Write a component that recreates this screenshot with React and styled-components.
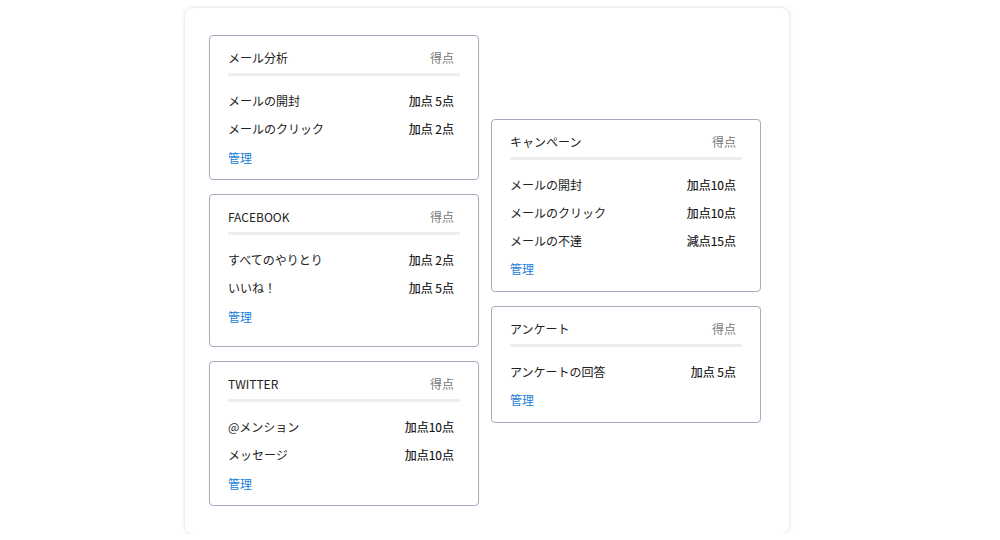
import React from "react";
import styled, { createGlobalStyle } from "styled-components";

const Global = createGlobalStyle`
  html, body { margin: 0; padding: 0; background: #ffffff; }
  body { font-family: "Noto Sans CJK JP", "Noto Sans", sans-serif; color: #222; }
`;

const Page = styled.div`
  padding: 8px 0 0 185px;
`;

const Panel = styled.div`
  width: 604px;
  box-sizing: border-box;
  padding: 27px 29px 28px 24px;
  background: #fff;
  border-radius: 8px;
  box-shadow: 0 0 3px 1px rgba(225, 215, 225, 0.7);
  display: grid;
  grid-template-columns: 270px 270px;
  column-gap: 12px;
  align-items: center;
`;

const Column = styled.div`
  display: flex;
  flex-direction: column;
  gap: 14px;
`;

const Card = styled.div`
  box-sizing: border-box;
  border: 1px solid #a9a9bf;
  border-radius: 4px;
  padding: 13px 18px ${(p) => (p.$extra ? 16 : 8)}px;
  background: #fff;
`;

const Header = styled.div`
  display: flex;
  justify-content: space-between;
  align-items: center;
  padding-right: 6px;
  font-size: 12px;
  line-height: 18px;
`;

const Score = styled.span`
  color: #777;
`;

const Divider = styled.div`
  height: 3px;
  background: #eeedf1;
  margin: 6px 0 11px;
`;

const Row = styled.div`
  display: flex;
  justify-content: space-between;
  align-items: center;
  padding-right: 6px;
  height: 28px;
  font-size: 12px;
  line-height: 18px;
`;

const Value = styled.span`
  color: #111;
  -webkit-text-stroke: 0.15px #111;
`;

const Link = styled.a`
  display: flex;
  align-items: center;
  height: 28px;
  font-size: 12px;
  color: #1a80d8;
  text-decoration: none;
  cursor: pointer;
`;

const cards = {
  left: [
    { title: "メール分析", rows: [["メールの開封", "加点 5点"], ["メールのクリック", "加点 2点"]] },
    { title: "FACEBOOK", extra: true, rows: [["すべてのやりとり", "加点 2点"], ["いいね！", "加点 5点"]] },
    { title: "TWITTER", rows: [["@メンション", "加点10点"], ["メッセージ", "加点10点"]] },
  ],
  right: [
    { title: "キャンペーン", rows: [["メールの開封", "加点10点"], ["メールのクリック", "加点10点"], ["メールの不達", "減点15点"]] },
    { title: "アンケート", rows: [["アンケートの回答", "加点 5点"]] },
  ],
};

function ScoreCard({ title, rows, extra }) {
  return (
    <Card $extra={extra}>
      <Header>
        <span>{title}</span>
        <Score>得点</Score>
      </Header>
      <Divider />
      {rows.map(([label, val]) => (
        <Row key={label}>
          <span>{label}</span>
          <Value>{val}</Value>
        </Row>
      ))}
      <Link>管理</Link>
    </Card>
  );
}

export default function App() {
  return (
    <Page>
      <Global />
      <Panel>
        <Column>
          {cards.left.map((c) => (
            <ScoreCard key={c.title} {...c} />
          ))}
        </Column>
        <Column>
          {cards.right.map((c) => (
            <ScoreCard key={c.title} {...c} />
          ))}
        </Column>
      </Panel>
    </Page>
  );
}
